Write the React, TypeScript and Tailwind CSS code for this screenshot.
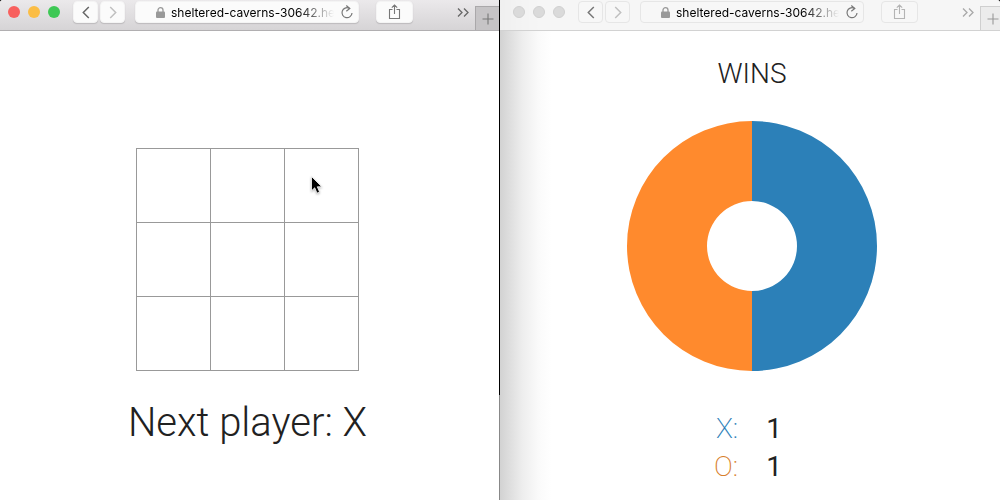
type ToolbarProps = { active: boolean };

function Chevron({ flip, color }: { flip?: boolean; color: string }) {
  return (
    <svg width="8" height="13" viewBox="0 0 8 13" fill="none" stroke={color} strokeWidth="1.5" aria-hidden="true">
      <path d={flip ? "M1.2 1 6.7 6.5 1.2 12" : "M6.8 1 1.3 6.5 6.8 12"} />
    </svg>
  );
}

function Toolbar({ active }: ToolbarProps) {
  const control = active
    ? "bg-[#fbfbfb] border-[#f4f4f4] shadow-[0_1px_1px_#bdbbbd]"
    : "bg-[#f7f7f7] border-[#e6e6e6]";
  const lights = active ? ["bg-[#f8605e]", "bg-[#fbbd45]", "bg-[#3ec855]"] : ["bg-[#dadada]", "bg-[#dadada]", "bg-[#dadada]"];
  return (
    <header
      className={`flex h-[31px] items-start border-b ${
        active ? "rounded-tl-[3px] border-[#b1afb1] bg-linear-to-b from-[#ebe9eb] to-[#d6d4d6] pl-2" : "rounded-tr-[3px] border-[#d2d2d2] bg-[#f5f5f5]/85 pl-[13px]"
      }`}
    >
      <div className="mt-1.5 mr-[13px] flex shrink-0 gap-2">
        {lights.map((c, i) => (
          <span key={i} className={`size-3 rounded-full ${c} ${active ? "" : "border border-[#d0d0d0]"}`} />
        ))}
      </div>
      <div className="mt-px flex shrink-0 gap-0.5">
        <button aria-label="Back" className={`flex h-[22px] w-[25px] items-center justify-center rounded-[4px] border ${control}`}>
          <Chevron color={active ? "#666" : "#777"} />
        </button>
        <button aria-label="Forward" className={`flex h-[22px] w-[25px] items-center justify-center rounded-[4px] border ${control}`}>
          <Chevron flip color="#c0c0c0" />
        </button>
      </div>
      <div className={`mt-px ml-2.5 flex h-[22px] min-w-0 flex-1 items-center rounded-[4px] border pr-1 pl-5 ${control}`}>
        <svg width="9" height="11" viewBox="0 0 9 11" className="mr-1.5 shrink-0" aria-hidden="true">
          <rect x="0" y="4.5" width="9" height="6.5" rx="1" fill="#999" />
          <path d="M2 5V3a2.5 2.3 0 0 1 5 0v2" fill="none" stroke="#999" strokeWidth="1.3" />
        </svg>
        <input
          aria-label="Address"
          readOnly
          value="sheltered-caverns-30642.he"
          className="w-0 min-w-0 flex-1 bg-transparent pt-0.5 font-['Inter',sans-serif] text-[12px] text-black outline-none mask-[linear-gradient(to_right,#000_calc(100%-40px),transparent_calc(100%-4px))]"
        />
        <button aria-label="Reload" className="ml-0.5 shrink-0">
          <svg width="14" height="15" viewBox="0 0 14 15" fill="none" stroke="#777" strokeWidth="1.2" aria-hidden="true">
            <path d="M9.2 3.2A5 5 0 1 0 12 8" />
            <path d="M6.3.5 9.8 3.5 6.3 6.3" />
          </svg>
        </button>
      </div>
      <button aria-label="Share" className={`mt-px ml-[17px] flex h-[22px] w-[37px] shrink-0 items-center justify-center rounded-[4px] border ${control}`}>
        <svg width="13" height="16" viewBox="0 0 13 16" fill="none" stroke={active ? "#777" : "#b4b4b4"} strokeWidth="1.1" aria-hidden="true">
          <path d="M4.5 5.5h-3v9h10v-9h-3M6.5 10V1M3.8 3.7 6.5 1l2.7 2.7" />
        </svg>
      </button>
      <button aria-label="More tools" className="mt-2 ml-11 shrink-0">
        <svg width="12" height="9" viewBox="0 0 12 9" fill="none" stroke={active ? "#666" : "#a8a8a8"} strokeWidth="1.3" aria-hidden="true">
          <path d="M1 .5 5 4.5 1 8.5M7 .5l4 4-4 4" />
        </svg>
      </button>
      <button
        aria-label="New tab"
        className={`mt-1.5 ml-1.5 flex h-6 shrink-0 items-center border-t border-l pl-1.5 ${
          active ? "w-6 border-[#aaa8aa] bg-[#c6c4c6]" : "w-5 border-[#cfcfcf] bg-[#ececec]"
        }`}
      >
        <svg width="12" height="12" viewBox="0 0 12 12" stroke={active ? "#777" : "#999"} strokeWidth="1.1" className="shrink-0" aria-hidden="true">
          <path d="M6 .5v11M.5 6h11" />
        </svg>
      </button>
    </header>
  );
}

function Board() {
  return (
    <div className="grid grid-cols-3 border-t border-l border-[#999]">
      {Array.from({ length: 9 }, (_, i) => (
        <button key={i} aria-label={`Square ${i + 1}`} className="relative size-[74px] border-r border-b border-[#999]">
          {i === 2 && (
            <svg width="12" height="19" viewBox="0 0 12 19" className="absolute top-[27px] left-[26px] drop-shadow-[0_1px_1px_rgba(0,0,0,0.3)]" aria-hidden="true">
              <path d="M.5.5v14.3l3.2-3 2.3 5.4 2.6-1.1-2.3-5.3h4.5z" fill="#000" stroke="#fff" strokeWidth=".8" />
            </svg>
          )}
        </button>
      ))}
    </div>
  );
}

const scores = [
  { player: "X:", wins: 1, color: "text-[#2c80b8]" },
  { player: "O:", wins: 1, color: "text-[#d8802c]" },
];

export default function App() {
  return (
    <div className="grid min-h-screen grid-cols-2 bg-black bg-[linear-gradient(to_bottom,#000_79%,#888_79%)] font-['Roboto',sans-serif] text-[#212121]">
      <section className="mr-px flex min-w-0 flex-col rounded-tl-[3px] bg-white">
        <Toolbar active />
        <main className="flex flex-col items-center pt-[117px] pr-1">
          <Board />
          <p className="mt-6 text-[40px] leading-[56px] font-light">Next player: X</p>
        </main>
      </section>
      <section className="min-w-0 rounded-tr-[3px] bg-white bg-[linear-gradient(to_right,#d2d2d2,#ededed_22px,#fafafa_38px,#fff_52px)]">
        <Toolbar active={false} />
        <main className="flex flex-col items-center pt-6 pl-1">
          <h1 className="text-[28px] leading-[38px] font-light">WINS</h1>
          <svg width="250" height="250" viewBox="0 0 250 250" className="mt-7" role="img" aria-label="Wins by player">
            <path d="M125 0a125 125 0 0 1 0 250v-80a45 45 0 0 0 0-90z" fill="#2c80b8" />
            <path d="M125 0a125 125 0 0 0 0 250v-80a45 45 0 0 1 0-90z" fill="#ff8a2d" />
          </svg>
          <table className="mt-[39px] mr-2 text-[28px] leading-[38px]">
            <tbody>
              {scores.map((s) => (
                <tr key={s.player}>
                  <th scope="row" className={`p-0 text-right font-extralight ${s.color}`}>{s.player}</th>
                  <td className="p-0 pl-7 font-normal">{s.wins}</td>
                </tr>
              ))}
            </tbody>
          </table>
        </main>
      </section>
    </div>
  );
}
